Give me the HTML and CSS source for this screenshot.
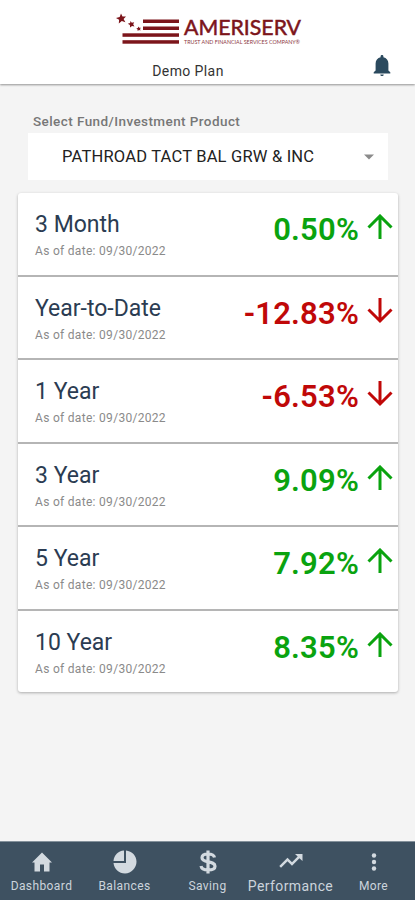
FILE: index.html
```
<!DOCTYPE html>
<html lang="en">
<head>
    <meta charset="UTF-8">
    <meta name="viewport" content="width=device-width, initial-scale=1.0">
    <title>Performance</title>
    <link rel="stylesheet" href="styles.css">
</head>
<body>
    <div class="app">
        <header class="header">
            <svg class="logo" width="194" height="42" viewBox="0 0 194 42">
                <g fill="#7c151b">
                    <path d="M10 1.500l1.500 3.100 3.500-.2-2.400 2.700 1.800 3.200-3.600-1.200-3 2.500.3-3.800L5 5.900l3.700-.8z"/>
                    <path d="M19.500 9l1.300 1.700 2.400-.5-1 2.100 1.200 2.100-2.400-.4-1.900 1.500-.2-2.400-2.100-1.300 2.300-.8z"/>
                    <path d="M27.500 14.500l.8 1.300 1.600-.1-.9 1.300.6 1.500-1.600-.4-1.300 1-.1-1.600-1.300-.9 1.500-.6z"/>
                    <rect x="32" y="7.500" width="36" height="3.500"/>
                    <rect x="32" y="14.500" width="36" height="3.500"/>
                    <rect x="11.500" y="21.300" width="56.500" height="3.500"/>
                    <rect x="11.500" y="28.200" width="56.500" height="3.500"/>
                </g>
                <text class="logo-name" x="73" y="22.500" textLength="117" lengthAdjust="spacingAndGlyphs">AMERISERV</text>
                <text class="logo-tag" x="73" y="31.700" textLength="116" lengthAdjust="spacingAndGlyphs">TRUST AND FINANCIAL SERVICES COMPANY®</text>
            </svg>
            <div class="plan">Demo Plan</div>
            <svg class="bell" width="20" height="24" viewBox="0 0 20 24">
                <path d="M10 1c.9 0 1.400.6 1.400 1.400v.8c3.100.8 5 3 5 6.400v7l1.900 1.600v1.300H1.700v-1.300l1.900-1.600v-7c0-3.400 1.900-5.600 5-6.400v-.8C8.600 1.600 9.100 1 10 1z"/>
                <path d="M8.300 20.400h3.400c0 1-.7 1.700-1.700 1.700s-1.700-.7-1.700-1.700z"/>
            </svg>
        </header>

        <main class="content">
            <div class="fund-label">Select Fund/Investment Product</div>
            <div class="fund-select">
                <span>PATHROAD TACT BAL GRW &amp; INC</span>
                <svg width="10" height="6" viewBox="0 0 10 6"><path d="M0 .5h10l-5 5z" fill="#8b8b8b"/></svg>
            </div>

            <div class="card">
                <div class="row">
                    <div class="period">
                        <h2>3 Month</h2>
                        <p>As of date: 09/30/2022</p>
                    </div>
                    <div class="value up">0.50%</div>
                    <svg class="arrow up" viewBox="0 0 26 26"><path d="M13 25V2M1.500 13.500L13 2l11.500 11.500"/></svg>
                </div>
                <div class="row">
                    <div class="period">
                        <h2>Year-to-Date</h2>
                        <p>As of date: 09/30/2022</p>
                    </div>
                    <div class="value down">-12.83%</div>
                    <svg class="arrow down" viewBox="0 0 26 26"><path d="M13 0v23M1.500 11.500L13 23l11.500-11.500"/></svg>
                </div>
                <div class="row">
                    <div class="period">
                        <h2>1 Year</h2>
                        <p>As of date: 09/30/2022</p>
                    </div>
                    <div class="value down">-6.53%</div>
                    <svg class="arrow down" viewBox="0 0 26 26"><path d="M13 0v23M1.500 11.500L13 23l11.500-11.500"/></svg>
                </div>
                <div class="row">
                    <div class="period">
                        <h2>3 Year</h2>
                        <p>As of date: 09/30/2022</p>
                    </div>
                    <div class="value up">9.09%</div>
                    <svg class="arrow up" viewBox="0 0 26 26"><path d="M13 25V2M1.500 13.500L13 2l11.500 11.500"/></svg>
                </div>
                <div class="row">
                    <div class="period">
                        <h2>5 Year</h2>
                        <p>As of date: 09/30/2022</p>
                    </div>
                    <div class="value up">7.92%</div>
                    <svg class="arrow up" viewBox="0 0 26 26"><path d="M13 25V2M1.500 13.500L13 2l11.500 11.500"/></svg>
                </div>
                <div class="row">
                    <div class="period">
                        <h2>10 Year</h2>
                        <p>As of date: 09/30/2022</p>
                    </div>
                    <div class="value up">8.35%</div>
                    <svg class="arrow up" viewBox="0 0 26 26"><path d="M13 25V2M1.500 13.500L13 2l11.500 11.500"/></svg>
                </div>
            </div>
        </main>

        <nav class="tabs">
            <a class="tab" href="#">
                <svg viewBox="0 0 24 24"><path d="M10 21.500v-7h4v7h5.500v-9H22L12 2.500 2 12.500h2.500v9z"/></svg>
                <span>Dashboard</span>
            </a>
            <a class="tab" href="#">
                <svg viewBox="0 0 24 24"><path d="M11 .5v10.500H.5C1 5 5 1 11 .5z"/><path d="M13 .5c6 .6 10.500 5.300 10.500 11.300S18.500 23.500 12 23.500C6 23.500 1.200 19 .5 13H13z"/></svg>
                <span>Balances</span>
            </a>
            <a class="tab" href="#">
                <svg viewBox="0 0 24 24"><path class="stroke" d="M18.500 7.500C18 5 15.500 4 12 4 8.500 4 6 5.300 6 7.800c0 5.700 13 2.500 13 8.400 0 2.600-3 3.800-7 3.800s-6.500-1.500-7-4M12 .5v23"/></svg>
                <span>Saving</span>
            </a>
            <a class="tab active" href="#">
                <svg viewBox="0 0 24 24"><path d="M16 4l2.700 2.600-5.700 5.700-4.500-4.500L.3 16l1.700 1.700 6.500-6.500L13 15.700l7.400-7.400L23.500 11V4z"/></svg>
                <span>Performance</span>
            </a>
            <a class="tab" href="#">
                <svg viewBox="0 0 24 24"><circle cx="12" cy="5.500" r="2.200"/><circle cx="12" cy="12" r="2.200"/><circle cx="12" cy="18.500" r="2.200"/></svg>
                <span>More</span>
            </a>
        </nav>
    </div>
</body>
</html>
```
FILE: styles.css
```
body {
    margin: 0;
    font-family: Roboto, "Liberation Sans", sans-serif;
    background: #f4f4f4;
}

.app {
    display: flex;
    flex-direction: column;
    height: 900px;
}

.header {
    display: grid;
    grid-template-columns: 1fr 194px 1fr;
    grid-template-rows: 42px 30px;
    height: 84px;
    box-sizing: border-box;
    padding-top: 12px;
    background: #fff;
    box-shadow: 0 1px 2px rgba(0, 0, 0, 0.4);
}

.logo {
    grid-column: 2;
}

.logo-name {
    font-family: Lato, sans-serif;
    font-size: 21px;
    font-weight: 400;
    fill: #7c151b;
    stroke: #7c151b;
    stroke-width: 0.5px;
}

.logo-tag {
    font-family: Lato, sans-serif;
    font-size: 6px;
    fill: #8d3a3f;
}

.plan {
    grid-column: 2;
    grid-row: 2;
    margin: 8px 39px 0 0;
    text-align: center;
    font-size: 14px;
    line-height: 18px;
    letter-spacing: 0.4px;
    color: #333;
}

.bell {
    grid-column: 3;
    grid-row: 1 / 3;
    justify-self: end;
    margin: 42px 23px 0 0;
    fill: #2b4a5e;
}

.content {
    flex: 1;
    padding: 28px 17px 0 18px;
}

.fund-label {
    margin-left: 15px;
    font-size: 13.5px;
    line-height: 18px;
    font-weight: 500;
    letter-spacing: 0.42px;
    color: #777;
}

.fund-select {
    display: flex;
    align-items: center;
    justify-content: space-between;
    height: 47px;
    margin: 3px 10px 13px;
    padding: 0 14px 0 34px;
    background: #fff;
    font-size: 16.5px;
    letter-spacing: 0.2px;
    color: #222;
}

.card {
    background: #fff;
    border-radius: 3px;
    box-shadow: 0 1px 3px rgba(0, 0, 0, 0.3);
}

.row {
    display: flex;
    box-sizing: border-box;
    height: 83.5px;
    padding: 18px 5px 0 17px;
    border-bottom: 2px solid #b5b5b5;
}

.row:last-child {
    height: 81.5px;
    border-bottom: none;
}

.period {
    flex: 1;
}

.period h2 {
    margin: 0;
    font-size: 23px;
    line-height: 28px;
    font-weight: 400;
    letter-spacing: 0;
    color: #2b3c52;
}

.period p {
    margin: 4px 0 0;
    font-size: 12px;
    line-height: 16px;
    letter-spacing: 0.3px;
    color: #8a8a8a;
}

.value {
    margin-top: 1px;
    font-size: 31px;
    line-height: 36px;
    font-weight: 600;
    letter-spacing: 0.2px;
}

.value.up {
    color: #0aa30f;
}

.value.down {
    color: #c00808;
}

.arrow {
    width: 26px;
    height: 26px;
    margin: 3px 0 0 8px;
    fill: none;
    stroke-width: 3;
}

.arrow.up {
    stroke: #0aa30f;
}

.arrow.down {
    stroke: #c00808;
}

.tabs {
    display: flex;
    height: 59px;
    box-sizing: border-box;
    border-top: 1px solid #84919b;
    background: #3e5161;
}

.tab {
    display: flex;
    flex: 1 1 0;
    min-width: 0;
    flex-direction: column;
    align-items: center;
    padding-top: 8px;
    color: #ccd4dc;
    font-size: 12px;
    line-height: 16px;
    letter-spacing: 0.4px;
    text-decoration: none;
}

.tab svg {
    width: 24px;
    height: 24px;
    margin-bottom: 4px;
    fill: #d3dae0;
}

.tab .stroke {
    fill: none;
    stroke: #d3dae0;
    stroke-width: 3.2;
}

.tab.active {
    font-size: 14px;
}
```
